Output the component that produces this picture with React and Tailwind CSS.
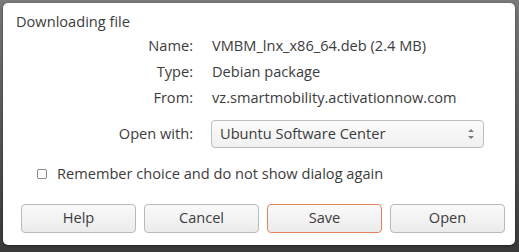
import React from 'react';

const rows = [
  ['Name:', 'VMBM_lnx_x86_64.deb (2.4 MB)'],
  ['Type:', 'Debian package'],
  ['From:', 'vz.smartmobility.activationnow.com'],
];

const Button = ({ children, active }) => (
  <button
    className={`w-[115px] h-[29px] rounded-[4px] border bg-gradient-to-b from-[#fafafa] to-[#ebebeb] text-[#3c3c3c] ${active ? 'border-[#e9805f]' : 'border-[#b9b9b9]'}`}
  >
    {children}
  </button>
);

const App = () => {
  return (
    <div className="w-[519px] h-[252px] bg-gradient-to-b from-[#7a7a7a] to-[#3a3a3a] pt-[3px] pl-[3px] font-['Open_Sans',sans-serif] text-[14.6px] text-[#3c3c3c]">
      <div className="w-[512px] h-[242px] bg-white rounded-[5px] shadow-[0_1px_3px_rgba(0,0,0,0.5)] flex flex-col">
        <div className="pl-[13px] pt-[8px] leading-[20px]">Downloading file</div>

        <div className="flex flex-col mt-[4px] gap-[6px]">
          {rows.map(([label, value]) => (
            <div key={label} className="flex leading-[20px]">
              <div className="w-[190px] text-right">{label}</div>
              <div className="pl-[19px]">{value}</div>
            </div>
          ))}
        </div>

        <div className="flex items-center mt-[13px]">
          <div className="w-[190px] text-right">Open with:</div>
          <div className="ml-[18px] w-[273px] h-[28px] rounded-[4px] border border-[#bdbdbd] bg-gradient-to-b from-[#fcfcfc] to-[#f0f0f0] flex items-center justify-between pl-[8px] pr-[9px]">
            <span>Ubuntu Software Center</span>
            <svg width="6" height="12" viewBox="0 0 6 12">
              <path d="M0 4 L3 1 L6 4 Z" fill="#7a7a7a" />
              <path d="M0 8 L3 11 L6 8 Z" fill="#7a7a7a" />
            </svg>
          </div>
        </div>

        <div className="flex items-center mt-[15px] pl-[34px]">
          <div className="w-[10px] h-[10px] border border-[#8a8a8a] rounded-[2px] bg-white" />
          <span className="ml-[10px]">Remember choice and do not show dialog again</span>
        </div>

        <div className="flex gap-[8px] mt-[19px] pl-[18px]">
          <Button>Help</Button>
          <Button>Cancel</Button>
          <Button active>Save</Button>
          <Button>Open</Button>
        </div>
      </div>
    </div>
  );
};

export default App;
